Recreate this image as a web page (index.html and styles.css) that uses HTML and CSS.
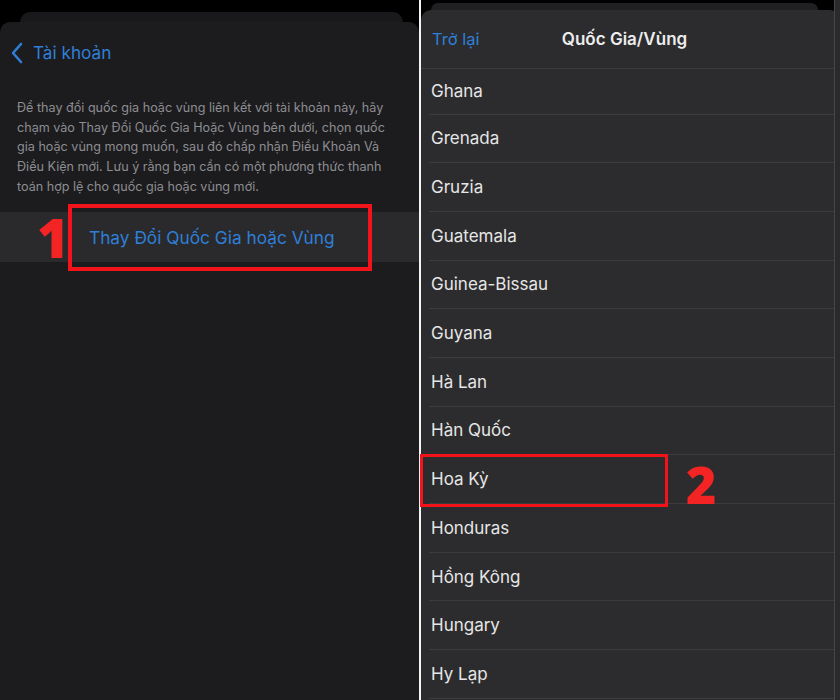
FILE: index.html
```html
<!DOCTYPE html>
<html lang="vi">
<head>
<meta charset="utf-8">
<link rel="stylesheet" href="styles.css">
</head>
<body>
<div class="page">
  <section class="left">
    <div class="back-card left-back"></div>
    <div class="sheet left-sheet">
      <div class="nav">
        <svg class="chev" width="14" height="22" viewBox="0 0 14 22"><path d="M11 2 L3 11 L11 20" fill="none" stroke="#2f7fd8" stroke-width="2.6" stroke-linecap="round" stroke-linejoin="round"/></svg>
        <span class="nav-title">Tài khoản</span>
      </div>
      <p class="desc">Để thay đổi quốc gia hoặc vùng liên kết với tài khoản này, hãy chạm vào Thay Đổi Quốc Gia Hoặc Vùng bên dưới, chọn quốc gia hoặc vùng mong muốn, sau đó chấp nhận Điều Khoản Và Điều Kiện mới. Lưu ý rằng bạn cần có một phương thức thanh toán hợp lệ cho quốc gia hoặc vùng mới.</p>
      <div class="action-row">
        <span class="action">Thay Đổi Quốc Gia hoặc Vùng</span>
        <span class="mark mark-1">1</span>
        <span class="hl hl-1"></span>
      </div>
    </div>
  </section>
  <div class="divider"></div>
  <section class="right">
    <div class="back-card right-back"></div>
    <div class="sheet right-sheet">
      <div class="header">
        <span class="back-link">Trở lại</span>
        <span class="header-title">Quốc Gia/Vùng</span>
      </div>
      <ul class="list">
        <li class="row first">Ghana</li>
        <li class="row">Grenada</li>
        <li class="row">Gruzia</li>
        <li class="row">Guatemala</li>
        <li class="row">Guinea-Bissau</li>
        <li class="row">Guyana</li>
        <li class="row">Hà Lan</li>
        <li class="row">Hàn Quốc</li>
        <li class="row target">Hoa Kỳ<span class="hl hl-2"></span><span class="mark mark-2">2</span></li>
        <li class="row">Honduras</li>
        <li class="row">Hồng Kông</li>
        <li class="row">Hungary</li>
        <li class="row">Hy Lạp</li>
      </ul>
    </div>
    <div class="edge"></div>
  </section>
</div>
</body>
</html>
```

FILE: styles.css
```css
* { box-sizing: border-box; }
html, body { margin: 0; padding: 0; }
body {
  background: #000;
  font-family: Inter, "Liberation Sans", Arial, sans-serif;
  width: 840px;
  height: 700px;
  overflow: hidden;
}
.page {
  display: flex;
  width: 840px;
  height: 700px;
}
.left {
  width: 419px;
  padding-top: 12px;
  display: flex;
  flex-direction: column;
  background: #000;
}
.divider {
  width: 2px;
  background: #f4f4f4;
}
.right {
  flex: 1;
  padding-top: 3px;
  display: flex;
  flex-direction: column;
  background: #000;
  position: relative;
}
.back-card {
  border-radius: 10px 10px 0 0;
  flex: none;
}
.left-back {
  height: 10px;
  margin: 0 16px 0 20px;
  background: #19191b;
}
.right-back {
  height: 7px;
  margin: 0 22px 0 10px;
  background: #202022;
}
.sheet {
  flex: 1;
  border-radius: 10px 10px 0 0;
}
.left-sheet {
  background: #1c1c1e;
}
.nav {
  height: 60px;
  display: flex;
  align-items: center;
  padding-left: 10px;
  padding-top: 1px;
}
.chev { margin-right: 9px; }
.nav-title {
  color: #2f7fd8;
  font-size: 17.2px;
}
.desc {
  margin: 16px 0 0 0;
  padding: 0 20px 0 17px;
  color: #8d8d92;
  font-size: 12.6px;
  line-height: 19.7px;
}
.action-row {
  margin-top: 15px;
  height: 50px;
  background: #2a2a2c;
  display: flex;
  align-items: center;
  padding-left: 89px;
  position: relative;
}
.action {
  color: #2f7fd8;
  font-size: 17.3px;
  padding-top: 1px;
}
.mark {
  position: absolute;
  font-family: "Open Sans", "Liberation Sans", sans-serif;
  font-weight: 800;
  color: #f52424;
  line-height: 1;
}
.mark-1 {
  left: 37px;
  top: -3px;
  font-size: 55px;
}
.hl {
  position: absolute;
  border: 4px solid #f2141a;
}
.hl-1 {
  left: 68px;
  top: -8px;
  width: 304px;
  height: 67px;
}
.right-sheet {
  background: #2c2c2e;
  display: flex;
  flex-direction: column;
}
.header {
  height: 59px;
  position: relative;
  display: flex;
  align-items: center;
  justify-content: center;
  border-bottom: 1px solid #3a3a3c;
  padding-bottom: 1px;
  margin-right: 4px;
}
.back-link {
  position: absolute;
  left: 11px;
  top: 19px;
  color: #2f7fd8;
  font-size: 16.5px;
}
.header-title {
  color: #ededed;
  font-size: 17px;
  font-weight: 600;
  margin-left: -8px;
}
.list {
  list-style: none;
  margin: 0;
  padding: 0;
}
.row {
  position: relative;
  height: 48.7px;
  display: flex;
  align-items: center;
  padding-left: 10px;
  margin-right: 5px;
  margin-left: 0;
  color: #e6e6e6;
  font-size: 17px;
  border-bottom: 1px solid #3c3c3e;
  border-image: linear-gradient(to right, transparent 9px, #3c3c3e 9px) 1;
}
.row.first {
  height: 45.5px;
  align-items: flex-end;
  padding-bottom: 13px;
}
.hl-2 {
  left: -1px;
  top: -1px;
  width: 248px;
  height: 53px;
  border-width: 3.5px;
}
.mark-2 {
  left: 265px;
  top: 3px;
  font-size: 52px;
}
.edge {
  position: absolute;
  right: 0;
  top: 0;
  bottom: 0;
  width: 6px;
  background: #2a2a2c;
  border-left: 1px solid #464648;
}
```
